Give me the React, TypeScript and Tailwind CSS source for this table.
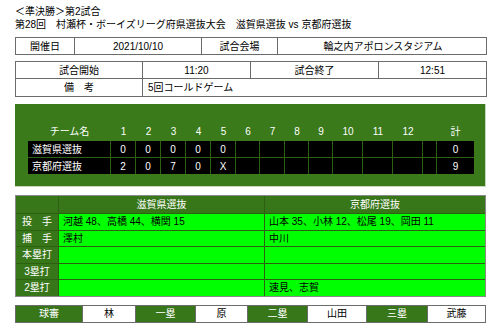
const font = { fontFamily: '"Liberation Sans", "Noto Sans CJK JP", sans-serif' }

const innings = ["1", "2", "3", "4", "5", "6", "7", "8", "9", "10", "11", "12"]
const scores = [
  { team: "滋賀県選抜", runs: ["0", "0", "0", "0", "0", "", "", "", "", "", "", ""], total: "0" },
  { team: "京都府選抜", runs: ["2", "0", "7", "0", "X", "", "", "", "", "", "", ""], total: "9" },
]
const cols = "grid-cols-[83px_25px_25px_25px_25px_25px_24px_25px_24px_24px_30px_30px_30px_14px_37px]"

const players = [
  { label: "投　手", shiga: "河越 48、高橋 44、横関 15", kyoto: "山本 35、小林 12、松尾 19、岡田 11" },
  { label: "捕　手", shiga: "澤村", kyoto: "中川" },
  { label: "本塁打", shiga: "", kyoto: "" },
  { label: "3塁打", shiga: "", kyoto: "" },
  { label: "2塁打", shiga: "", kyoto: "速見、志賀" },
]

const umpires = [
  ["球審", "林"],
  ["一塁", "原"],
  ["二塁", "山田"],
  ["三塁", "武藤"],
]

export default function App() {
  return (
    <div className="w-[500px] h-[330px] bg-white text-[10px] text-black pl-[15px] pt-[5px]" style={font}>
      {/* Title */}
      <div className="leading-[13px] text-[10px]">＜準決勝＞第2試合</div>
      <div className="leading-[13px] text-[10px]">第28回　村瀬杯・ボーイズリーグ府県選抜大会　滋賀県選抜 vs 京都府選抜</div>

      {/* Date / venue */}
      <div className="mt-[6px] w-[472px] h-[18px] grid grid-cols-[59px_127px_76px_210px] border border-[#6b6b6b] bg-white">
        <div className="flex items-center justify-center border-r border-[#6b6b6b]">開催日</div>
        <div className="flex items-center justify-center border-r border-[#6b6b6b]">2021/10/10</div>
        <div className="flex items-center justify-center border-r border-[#6b6b6b]">試合会場</div>
        <div className="flex items-center justify-center">輪之内アポロンスタジアム</div>
      </div>

      {/* Time / notes */}
      <div className="mt-[6px] w-[472px] border border-[#6b6b6b] bg-white">
        <div className="h-[17px] grid grid-cols-[127px_108px_128px_107px] border-b border-[#6b6b6b]">
          <div className="flex items-center justify-center border-r border-[#6b6b6b]">試合開始</div>
          <div className="flex items-center justify-center border-r border-[#6b6b6b]">11:20</div>
          <div className="flex items-center justify-center border-r border-[#6b6b6b]">試合終了</div>
          <div className="flex items-center justify-center">12:51</div>
        </div>
        <div className="h-[17px] grid grid-cols-[127px_1fr]">
          <div className="flex items-center justify-center border-r border-[#6b6b6b]">備　考</div>
          <div className="flex items-center pl-[5px]">5回コールドゲーム</div>
        </div>
      </div>

      {/* Scoreboard */}
      <div className="mt-[7px] w-[471px] h-[83px] bg-[#3a7a1a] border-r border-b border-[#c8d8c0] pt-[20px] pl-[13px]">
        <div className={`grid ${cols} w-[446px] h-[14px] text-white`}>
          <div className="flex items-center justify-center">チーム名</div>
          {innings.map((n) => (
            <div key={n} className="flex items-center justify-center">{n}</div>
          ))}
          <div />
          <div className="flex items-center justify-center">計</div>
        </div>
        <div className={`grid ${cols} w-[446px] gap-y-px mt-[3px] bg-[#2c6112] text-white`}>
          {scores.map((s) => (
            <div key={s.team} className="contents">
              <div className="h-[16px] bg-black flex items-center pl-[4px] border-r border-[#2c6112]">{s.team}</div>
              {s.runs.map((r, i) => (
                <div key={i} className="h-[16px] bg-black flex items-center justify-center border-r border-[#2c6112]">{r}</div>
              ))}
              <div className="h-[16px] bg-black border-r border-[#2c6112]" />
              <div className="h-[16px] bg-black flex items-center justify-center">{s.total}</div>
            </div>
          ))}
        </div>
      </div>

      {/* Players */}
      <div className="mt-[8px] w-[471px] border border-[#8a8a8a] bg-[#2c6112] grid grid-cols-[42px_205px_1fr] gap-px">
        <div className="h-[17px] bg-[#38761a]" />
        <div className="h-[17px] bg-[#38761a] text-white flex items-center justify-center">滋賀県選抜</div>
        <div className="h-[17px] bg-[#38761a] text-white flex items-center justify-center">京都府選抜</div>
        {players.map((p) => (
          <div key={p.label} className="contents">
            <div className="h-[15.5px] bg-[#38761a] text-white flex items-center justify-center">{p.label}</div>
            <div className="h-[15.5px] bg-[#00ff00] flex items-center pl-[4px]">{p.shiga}</div>
            <div className="h-[15.5px] bg-[#00ff00] flex items-center pl-[4px]">{p.kyoto}</div>
          </div>
        ))}
      </div>

      {/* Umpires */}
      <div className="mt-[8px] w-[471px] h-[18px] border border-[#6b6b6b] grid grid-cols-[67px_53px_60px_52px_60px_59px_61px_1fr]">
        {umpires.map(([role, name], i) => (
          <div key={role} className="contents">
            <div className="bg-[#38761a] text-white flex items-center justify-center border-r border-[#6b6b6b]">{role}</div>
            <div className={`bg-white flex items-center justify-center ${i < 3 ? "border-r border-[#6b6b6b]" : ""}`}>{name}</div>
          </div>
        ))}
      </div>
    </div>
  )
}
